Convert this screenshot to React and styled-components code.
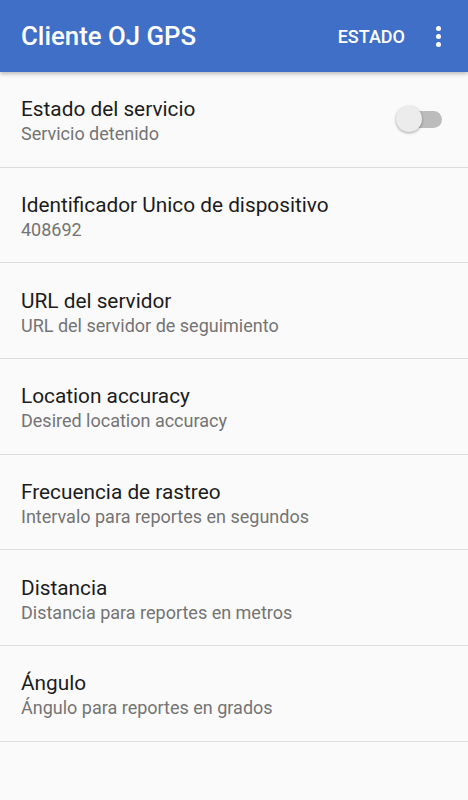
import React from 'react'
import styled, { createGlobalStyle } from 'styled-components'

const Global = createGlobalStyle`
body {
  margin: 0;
  background: #fafafa;
  font-family: Roboto, "Liberation Sans", sans-serif;
}
`

const Page = styled.div`
width: 468px;
min-height: 800px;
background: #fafafa;
`

const AppBar = styled.header`
height: 72px;
background: #3f6fc6;
display: flex;
align-items: center;
padding: 0 27px 0 21px;
box-sizing: border-box;
box-shadow: 0 2px 4px rgba(0, 0, 0, 0.25);
position: relative;
`

const Title = styled.h1`
flex: 1;
margin: 0;
color: #fff;
font-size: 25.8px;
font-weight: 500;
`

const Action = styled.span`
color: #fff;
font-size: 18px;
font-weight: 500;
margin-right: 30px;
`

const Overflow = styled.div`
display: flex;
flex-direction: column;
gap: 3px;
width: 6px;
align-items: center;
`

const Dot = styled.span`
width: 5px;
height: 5px;
border-radius: 50%;
background: #fff;
`

const List = styled.div`
display: flex;
flex-direction: column;
`

const Row = styled.div`
height: 95.7px;
box-sizing: border-box;
border-bottom: 1px solid #dcdcdc;
display: flex;
align-items: center;
padding: 3px 26px 0 21px;
`

const Texts = styled.div`
flex: 1;
display: flex;
flex-direction: column;
gap: 2px;
`

const Primary = styled.div`
font-size: 20.8px;
color: #1c1c1c;
`

const Secondary = styled.div`
font-size: 18px;
color: #747474;
`

const Switch = styled.div`
position: relative;
width: 46px;
height: 26px;
display: flex;
align-items: center;
justify-content: flex-end;
margin-bottom: 3px;
`

const Track = styled.div`
width: 40px;
height: 17px;
border-radius: 9px;
background: #bcbcbc;
`

const Thumb = styled.div`
position: absolute;
left: 0;
top: 0;
width: 26px;
height: 26px;
border-radius: 50%;
background: #ececec;
box-shadow: 0 1px 3px rgba(0, 0, 0, 0.35);
`

const items = [
  { title: 'Estado del servicio', sub: 'Servicio detenido', toggle: true },
  { title: 'Identificador Unico de dispositivo', sub: '408692' },
  { title: 'URL del servidor', sub: 'URL del servidor de seguimiento' },
  { title: 'Location accuracy', sub: 'Desired location accuracy' },
  { title: 'Frecuencia de rastreo', sub: 'Intervalo para reportes en segundos' },
  { title: 'Distancia', sub: 'Distancia para reportes en metros' },
  { title: 'Ángulo', sub: 'Ángulo para reportes en grados' },
]

const App = () => {
  return (
    <Page>
      <Global />
      <AppBar>
        <Title>Cliente OJ GPS</Title>
        <Action>ESTADO</Action>
        <Overflow>
          <Dot />
          <Dot />
          <Dot />
        </Overflow>
      </AppBar>
      <List>
        {items.map(item => (
          <Row key={item.title}>
            <Texts>
              <Primary>{item.title}</Primary>
              <Secondary>{item.sub}</Secondary>
            </Texts>
            {item.toggle && (
              <Switch>
                <Track />
                <Thumb />
              </Switch>
            )}
          </Row>
        ))}
      </List>
    </Page>
  )
}

export default App
